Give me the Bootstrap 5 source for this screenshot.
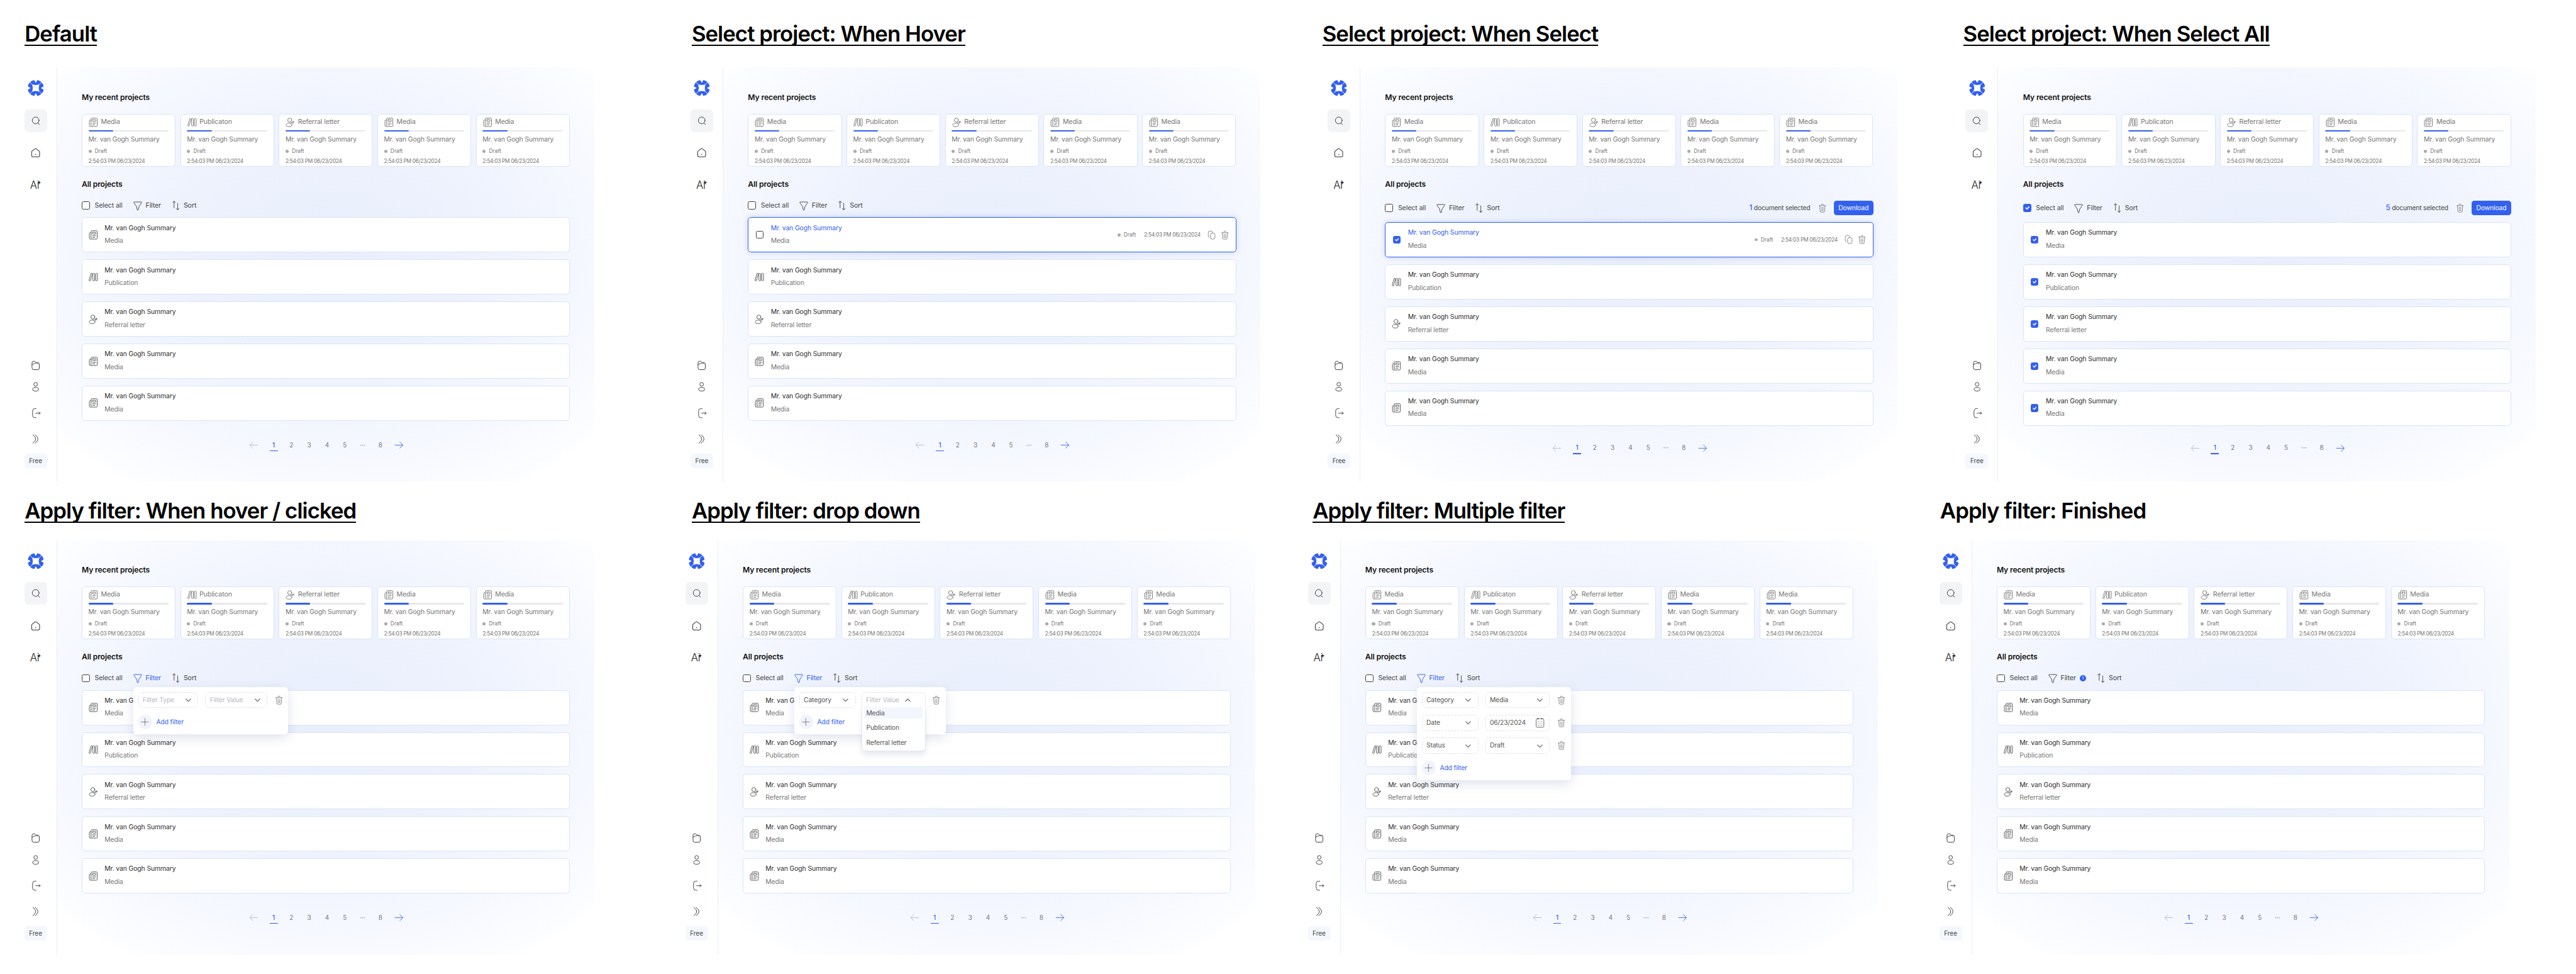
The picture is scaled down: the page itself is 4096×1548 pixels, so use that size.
<!doctype html>
<html lang="en">
<head>
<meta charset="utf-8">
<title>Projects screens</title>
<link href="https://cdn.jsdelivr.net/npm/bootstrap@5.3.0/dist/css/bootstrap.min.css" rel="stylesheet">
<style>
html,body{margin:0;background:#fff;overflow:hidden}
body{font-family:Inter,"Liberation Sans",sans-serif;color:#333}
.stage{zoom:.64322;width:6368px;height:2407px}
.shotrow{height:1168px;padding-left:60px}
.sa{width:1647px}.sb{width:1575px}.sc{width:1577px}.sd{width:1409px}
.se{width:1634px}.sf{width:1539px}.sg{width:1561px}.sh{width:1409px}
.shead{height:167px;padding-top:56px;margin:0;font-size:54px;line-height:54px;font-weight:600;letter-spacing:-.027em;color:#000;white-space:nowrap}
.shotrow.second .shead{padding-top:66px}
.shead span{display:inline-block;border-bottom:4px solid #000;padding-bottom:1px}
.sa .shead{margin-left:1px}.sb .shead{margin-left:3px}.sc .shead{margin-left:-13px}.sd .shead{margin-left:-6px}
.se .shead{margin-left:1px}.sf .shead{margin-left:16px}.sg .shead{margin-left:12px}.sh .shead{margin-left:2px}
.sh .shead span{border-bottom-color:transparent}
.appw{width:1409px;height:1023px}
.rail{width:81px;padding:31px 24px 33px 0;border-right:1px solid #e8edf9;flex:none}
.rico{width:56px;height:40px;flex:none;color:#333}
.rico svg{width:27px;height:27px}
.rsearch{height:56px;background:#f3f4f6;border-radius:10px;margin-top:32px}
.rsearch svg{width:25px;height:25px}
.rhome{height:56px;margin-top:24px}
.rai{height:56px;margin-top:24px;font-size:26px;font-weight:300;color:#222;letter-spacing:-.02em;line-height:1}
.rico.rai svg{width:10px;height:10px;margin:-12px 0 0 -5px;color:#222}
.ruser{margin-top:13px}.rout{margin-top:25px}.rchev{margin-top:24px}
.rico.rout svg{width:30px;height:30px}
.rfree{height:36px;width:56px;background:#f4f7fe;border-radius:8px;margin-top:16px;font-size:15.5px;color:#444;flex:none}
.mainw{width:1328px;padding:61px 60px 0 61px;background:radial-gradient(ellipse 68% 66% at 50% 45%,#e8eefc 0%,#edf2fd 42%,#f6f8ff 74%,#fcfdff 96%,#fff 100%)}
.sect{font-size:19px;line-height:24px;font-weight:600;color:#111;margin:0;letter-spacing:-.012em}
.cardrow{gap:11.6px;margin-top:29px;margin-bottom:31px}
.pcard{width:232px;height:131px;border:1px solid #d8e3fb;border-radius:8px;padding:0 16px 0 15px;flex:none;background:#fff;color:#777}
.chead{height:38px;gap:9px;margin-left:2px;font-size:16.5px;letter-spacing:-.01em}
.chead svg{width:26px;height:26px;margin:0 -3px}
.pcard .progress{height:4px;background:#e8e8eb;border-radius:2px;margin-top:1px}
.pcard .progress-bar{background:#3360ef;border-radius:2px}
.ctitle{font-size:16.2px;line-height:20px;margin-top:10px;letter-spacing:-.012em;white-space:nowrap}
.cdraft{font-size:13px;line-height:16px;margin-top:10px;gap:8px}
.ddot{width:8px;height:8px;border-radius:50%;background:#a9a9ae;flex:none}
.ctime{font-size:13px;line-height:16px;margin-top:8px;letter-spacing:-.035em;white-space:nowrap}
.tools{height:20px;margin-top:31px;margin-bottom:19px;font-size:16.5px;color:#444;letter-spacing:-.01em}
.tools.sel{height:37px;margin-top:28.5px;margin-bottom:16.5px}
.ck.form-check-input{width:20px;height:20px;margin:0;border:1.6px solid #3d3d3d;border-radius:4px;flex:none;background-color:#fff}
.ck.form-check-input:checked{background-color:#3360ef;border-color:#3360ef}
.tck{margin-left:1px}
.tlab{margin-left:12px;width:68px;white-space:nowrap}
.tfil{width:25px;height:25px;margin:0 -3.500px 0 25.500px;flex:none}
.tft{margin-left:11px;width:38px}
.tbad.badge{margin-left:9px;width:16px;height:16px;padding:0;border-radius:50%;background:#3360ef;font-size:10px;font-weight:400;line-height:16px;color:#fff}
.tsort{width:27px;height:27px;margin:0 -5.500px 0 23.500px;flex:none}
.tst{margin-left:11px}
.blue{color:#3360ef}
.selnote{white-space:nowrap;font-size:16px;margin-right:18px;color:#444;letter-spacing:-.02em}
.selnote b{font-weight:500;color:#3360ef;font-size:18px}
.seltrash{width:24px;height:24px;margin-right:16px;color:#777;display:block}
.seltrash svg{width:24px;height:24px;display:block}
.dlbtn.btn{width:98px;height:37px;padding:0;background:#3360ef;border:0;border-radius:7px;font-size:16px;color:#fff;letter-spacing:-.01em}
.rowswrap{gap:17px}
.prow{height:87px;border:1px solid #d8e3fb;border-radius:8px;background:#fff;padding:0 15px 0 17px;flex:none}
.prow .pic{width:20px;height:20px;color:#555;flex:none;display:block}
.pic svg{width:26px;height:26px;margin:-3px;display:block}
.prow .ck{width:19px;height:19px;margin-left:1px}
.ptxt{margin-left:18px;flex:none}
.ptitle{font-size:16.2px;line-height:20px;letter-spacing:-.012em;white-space:nowrap;color:#2d2d2d}
.psub{font-size:16.2px;line-height:20px;color:#777;margin-top:12px;letter-spacing:-.012em}
.prow.on{border:1.6px solid #3360ef;box-shadow:0 0 14px rgba(51,96,239,.22)}
.prow.on .ptitle{color:#3360ef}
.rmeta{gap:8px;font-size:13px;color:#777;margin-right:16px}
.rtime{margin-left:12px;letter-spacing:-.035em;white-space:nowrap}
.rmeta .ddot{width:7px;height:7px}
.racts{gap:8px;color:#777}
.racts svg{width:24px;height:24px}
.pager{margin-left:403px;margin-top:48px;height:24px;font-size:15.5px;color:#777}
.pager.low{margin-top:43px}
.pgi{width:44px;height:24px;flex:none;position:relative}
.pgi svg{width:26px;height:26px}
.pgprev{color:#b5b7bd;margin-right:5.5px}
.pgnext{color:#3360ef;margin-left:2px}
.pgi.act{color:#3360ef;font-weight:500}
.pgi.act::after{content:"";position:absolute;left:12px;right:12px;bottom:-3px;height:2px;background:#3360ef}
.listhold{position:relative}
.fpop{position:absolute;left:127.5px;top:-7px;background:#fff;border-radius:8px;box-shadow:0 8px 26px rgba(60,80,140,.16);padding:12px 11px 12px 12px;z-index:5;font-size:16px;color:#555}
.frow{margin-bottom:17px}
.ffield{height:39.5px;border:1px dashed #dcdfe6;border-radius:10px;background:#fff;padding:0 13px 0 10px;flex:none;position:relative;white-space:nowrap;letter-spacing:-.012em}
.ffield svg{width:20px;height:20px;color:#555}
.ph{color:#b8b9be}
.ftrash{width:24px;height:24px;color:#777;flex:none}
.ftrash svg{width:24px;height:24px}
.e1 .f1{width:148.5px}.e1 .f2{width:154px;margin-left:17.5px}.e1 .ftrash{margin-left:16px}
.f1p .f1{width:140px}.f1p .f2{width:159px;margin-left:14px;justify-content:flex-start!important;border-bottom-left-radius:0;border-bottom-right-radius:0}.f1p .ftrash{margin-left:14px}
.f1p{padding-right:12px}
.g1 .f1{width:140px}.g1 .f2{width:160px;margin-left:17px}.g1 .ftrash{margin-left:17px}
.g1{padding-right:12px}
.f2 .upch{margin-left:11px}
.ffield svg.calic{width:27px;height:27px;margin-right:-3px}
.fmenu.dropdown-menu{position:absolute;display:block;left:-1px;right:-1px;top:100%;min-width:0;border:1px dashed #dcdfe6;border-top:0;border-radius:0 0 10px 10px;margin:0;padding:0 5px 7px;box-shadow:0 8px 14px rgba(60,80,140,.12);font-size:16px;color:#555}
.fmenu .dropdown-item{height:28px;line-height:28px;padding:0 5px;margin-bottom:8px;color:#555;border-radius:4px;letter-spacing:-.012em}
.fmenu .dropdown-item:last-child{margin-bottom:0}
.fmenu .dropdown-item.cur{background:#f3f6fe}
.addf{color:#3360ef;gap:10px;height:36px;letter-spacing:-.012em}
.addc{width:35px;height:36px;border-radius:50%;background:#f1f4fd;color:#666}
.addc svg{width:23px;height:23px}
.logo{width:40px;height:40px;display:block;margin-left:8px}
</style>
</head>
<body>
<svg width="0" height="0" class="position-absolute">
<defs>
<g id="i-doc" fill="none" stroke="currentColor" stroke-width="1.4" stroke-linecap="round" stroke-linejoin="round"><path d="M7 19.500V4.500A2 2 0 0 1 9 2.500h10a2 2 0 0 1 2 2v15a2 2 0 0 1-2 2H5a2 2 0 0 1-2-2V9a2 2 0 0 1 2-2h2"/><rect x="10.500" y="6" width="7" height="4.200" rx=".6"/><path d="M10.500 14h7M10.500 17.500h5"/></g>
<g id="i-book" transform="translate(1.200 1.200) scale(.9)" fill="none" stroke="currentColor" stroke-width="1.500" stroke-linejoin="round"><path d="M7 2.500h1.600a1 1 0 0 1 1 1.300L4.800 20.600a1.200 1.200 0 0 1-1.100.9H2.200a1 1 0 0 1-1-1.300L6 3.400a1 1 0 0 1 1-.9z"/><rect x="11" y="2.500" width="4.600" height="19" rx="1.800"/><rect x="18" y="2.500" width="4.600" height="19" rx="1.800"/></g>
<g id="i-ref" fill="none" stroke="currentColor" stroke-width="1.400" stroke-linecap="round"><circle cx="11" cy="7" r="4.600"/><ellipse cx="9.500" cy="18" rx="6.500" ry="4"/><path d="M13.500 13.500c2.500-.2 4.500-.8 6.500-3.500.8 2-.5 4-3 4.500M20 10.200c-1 .1-2 .2-3 .8"/></g>
<g id="i-search" fill="none" stroke="currentColor" stroke-width="1.400" stroke-linecap="round"><circle cx="11.500" cy="11" r="8"/><path d="M17.500 17.500l3 3.500"/></g>
<g id="i-home" fill="none" stroke="currentColor" stroke-width="1.400" stroke-linejoin="round"><path d="M10.400 3.700a2.600 2.600 0 0 1 3.200 0l6.200 4.900a2.400 2.400 0 0 1 .9 2V18a3 3 0 0 1-3 3H6.300a3 3 0 0 1-3-3v-7.400a2.400 2.400 0 0 1 .9-2z"/><circle cx="12" cy="16" r="1.100" fill="currentColor" stroke="none"/></g>
<g id="i-folder" fill="none" stroke="currentColor" stroke-width="1.300" stroke-linecap="round" stroke-linejoin="round"><path d="M4 10V6.500A3.500 3.500 0 0 1 7.500 3H10l3 3h3.500a3.500 3.500 0 0 1 3.500 3.500V18a3.500 3.500 0 0 1-3.500 3.500H7.500A3.500 3.500 0 0 1 4 18z"/><path d="M4 11c2-2.500 4-3 7-3 1.500-2 4-2 6 .5"/></g>
<g id="i-user" fill="none" stroke="currentColor" stroke-width="1.300"><circle cx="12" cy="6.500" r="4"/><ellipse cx="12" cy="17.500" rx="6.500" ry="4"/></g>
<g id="i-out" fill="none" stroke="currentColor" stroke-width="1.100" stroke-linecap="round" stroke-linejoin="round"><path d="M13 3h-2.500A4.500 4.500 0 0 0 6 7.500v9A4.500 4.500 0 0 0 10.500 21H13"/><path d="M12 12h9M18.500 9.500L21 12l-2.500 2.500"/></g>
<g id="i-chev2" fill="none" stroke="currentColor" stroke-width="1.300" stroke-linecap="round"><path d="M6 3c4 3 6 6 6 9s-2 6-6 9M11 3c4 3 6 6 6 9s-2 6-6 9"/></g>
<g id="i-fun" fill="none" stroke="currentColor" stroke-width="1.400" stroke-linejoin="round"><path d="M3.500 3h17a1 1 0 0 1 .8 1.600L15 13.500 13.300 21.300a1.300 1.300 0 0 1-2.600 0L9 13.500 2.700 4.600A1 1 0 0 1 3.500 3z"/></g>
<g id="i-sort" fill="none" stroke="currentColor" stroke-width="1.300" stroke-linecap="round" stroke-linejoin="round"><path d="M8 17V2.500M5 5.500l3-3 3 3M16 7v14.500M13 18.500l3 3 3-3"/></g>
<g id="i-trash" fill="none" stroke="currentColor" stroke-width="1.300" stroke-linecap="round" stroke-linejoin="round"><path d="M9.500 5V4a2 2 0 0 1 2-2h1a2 2 0 0 1 2 2v1M4 6h16M5.500 6l1 14a2 2 0 0 0 2 2h7a2 2 0 0 0 2-2l1-14M9 11h6M9 14.500h6M9.500 18h5"/></g>
<g id="i-copy" fill="none" stroke="currentColor" stroke-width="1.300" stroke-linecap="round" stroke-linejoin="round"><rect x="9" y="7" width="11" height="15" rx="4.500"/><path d="M6 17a3 3 0 0 1-2.500-3V6A4 4 0 0 1 7.500 2h3a4 4 0 0 1 4 3"/></g>
<g id="i-down" fill="none" stroke="currentColor" stroke-width="2" stroke-linecap="round" stroke-linejoin="round"><path d="M5 9l7 7 7-7"/></g>
<g id="i-up" fill="none" stroke="currentColor" stroke-width="2" stroke-linecap="round" stroke-linejoin="round"><path d="M5 16l7-7 7 7"/></g>
<g id="i-plus" fill="none" stroke="currentColor" stroke-width="1.300" stroke-linecap="round"><path d="M12 3v18M3 12h18"/></g>
<g id="i-cal" fill="none" stroke="currentColor" stroke-width="1.200" stroke-linecap="round"><rect x="3.500" y="3" width="17" height="19" rx="3"/><path d="M8 2v2M16 2v2M8 9.500h.01M12 9.500h.01M16 9.500h.01M8 13.500h.01M12 13.500h.01M16 13.500h.01M8 17.500h.01M12 17.500h.01M16 17.500h.01" stroke-width="1.600"/></g>
<g id="i-left" fill="none" stroke="currentColor" stroke-width="1.300" stroke-linecap="round" stroke-linejoin="round"><path d="M21 12H4M10 5l-7 7 7 7"/></g>
<g id="i-right" fill="none" stroke="currentColor" stroke-width="1.300" stroke-linecap="round" stroke-linejoin="round"><path d="M3 12h17M14 5l7 7-7 7"/></g>
<path id="i-star" fill="currentColor" d="M12 0c1 7 4 10 12 12-8 2-11 5-12 12-1-7-4-10-12-12 8-2 11-5 12-12z"/>
<g id="i-logo"><circle cx="20" cy="20" r="20" fill="#3360ef"/><path d="M12 12Q20 15 28 12 25 20 28 28 20 25 12 28 15 20 12 12z" fill="#fff" stroke="#fff" stroke-width="1.500" stroke-linejoin="round"/><path d="M12 12L3 3M28 12l9-9M28 28l9 9M12 28l-9 9" stroke="#fff" stroke-width="1.300"/><path d="M15.500-1L19 6a1.100 1.100 0 0 0 2 0L24.500-1zM15.500 41L19 34a1.100 1.100 0 0 1 2 0L24.500 41zM-1 15.500L6 19a1.100 1.100 0 0 1 0 2L-1 24.500zM41 15.500L34 19a1.100 1.100 0 0 0 0 2L41 24.500z" fill="#fff"/></g>
</defs>
</svg>
<div class="stage" id="stage"></div>
<script>
const ic=(n,c='')=>`<svg viewBox="0 0 24 24" class="${c}" aria-hidden="true"><use href="#i-${n}"/></svg>`;
const kinds=[['doc','Media','Media'],['book','Publicaton','Publication'],['ref','Referral letter','Referral letter'],['doc','Media','Media'],['doc','Media','Media']];
const cards=kinds.map(k=>`<div class="card pcard"><div class="chead d-flex align-items-center">${ic(k[0])}<span>${k[1]}</span></div><div class="progress"><div class="progress-bar" style="width:31%"></div></div><div class="ctitle">Mr. van Gogh Summary</div><div class="cdraft d-flex align-items-center"><i class="ddot"></i><span>Draft</span></div><div class="ctime">2:54:03 PM 06/23/2024</div></div>`).join('');
const rail=`<aside class="rail d-flex flex-column">
<div class="rlogo"><svg class="logo" viewBox="0 0 40 40" aria-hidden="true"><use href="#i-logo"/></svg></div>
<div class="rico rsearch d-flex align-items-center justify-content-center">${ic('search')}</div>
<div class="rico rhome d-flex align-items-center justify-content-center">${ic('home')}</div>
<div class="rico rai d-flex align-items-center justify-content-center"><span>Ai</span>${ic('star')}</div>
<div class="rico mt-auto d-flex align-items-center justify-content-center">${ic('folder')}</div>
<div class="rico ruser d-flex align-items-center justify-content-center">${ic('user')}</div>
<div class="rico rout d-flex align-items-center justify-content-center">${ic('out')}</div>
<div class="rico rchev d-flex align-items-center justify-content-center">${ic('chev2')}</div>
<div class="rfree d-flex align-items-center justify-content-center">Free</div>
</aside>`;
function field(cls,txt,opt={}){const t=opt.ph?`<span class="ph">${txt}</span>`:`<span>${txt}</span>`;const tail=opt.tail||ic(opt.up?'up':'down',opt.up?'upch':'');return `<div class="ffield ${cls} d-flex align-items-center justify-content-between">${t}${tail}${opt.menu||''}</div>`}
const ftr=`<div class="ftrash d-flex justify-content-center">${ic('trash')}</div>`;
const add=`<div class="addf d-flex align-items-center"><span class="addc d-flex align-items-center justify-content-center">${ic('plus')}</span><span>Add filter</span></div>`;
const menu=`<div class="dropdown-menu fmenu"><div class="dropdown-item cur">Media</div><div class="dropdown-item">Publication</div><div class="dropdown-item">Referral letter</div></div>`;
const pops={
 e:`<div class="fpop e1"><div class="frow d-flex align-items-center">${field('f1','Filter Type',{ph:1})}${field('f2','Filter Value',{ph:1})}${ftr}</div>${add}</div>`,
 f:`<div class="fpop f1p"><div class="frow d-flex align-items-center">${field('f1','Category')}${field('f2','Filter Value',{ph:1,up:1,menu})}${ftr}</div>${add}</div>`,
 g:`<div class="fpop g1"><div class="frow d-flex align-items-center">${field('f1','Category')}${field('f2','Media')}${ftr}</div><div class="frow d-flex align-items-center">${field('f1','Date')}${field('f2','06/23/2024',{tail:ic('cal','calic')})}${ftr}</div><div class="frow d-flex align-items-center">${field('f1','Status')}${field('f2','Draft')}${ftr}</div>${add}</div>`
};
const meta=`<div class="rmeta d-flex align-items-center ms-auto"><i class="ddot"></i><span>Draft</span><span class="rtime">2:54:03 PM 06/23/2024</span></div><div class="racts d-flex align-items-center">${ic('copy')}${ic('trash')}</div>`;
function row(i,p){const k=kinds[i];const sub=k[2];let left=`<span class="pic">${ic(k[0])}</span>`,cl='',rt='';
 if(p.hover&&i==0){left=`<input class="form-check-input ck" type="checkbox" aria-label="select">`;cl='on';rt=meta}
 if(p.sel1&&i==0){left=`<input class="form-check-input ck" type="checkbox" checked aria-label="select">`;cl='on';rt=meta}
 if(p.all){left=`<input class="form-check-input ck" type="checkbox" checked aria-label="select">`}
 return `<div class="card flex-row prow align-items-center ${cl}">${left}<div class="ptxt"><div class="ptitle">Mr. van Gogh Summary</div><div class="psub">${sub}</div></div>${rt}</div>`}
function panel(p){
 const sel=p.sel1||p.all;
 const right=sel?`<div class="ms-auto d-flex align-items-center"><span class="selnote"><b>${p.all?5:1}</b> document selected</span><span class="seltrash">${ic('trash')}</span><button class="btn dlbtn" type="button">Download</button></div>`:'';
 const rows=[0,1,2,3,4].map(i=>row(i,p)).join('');
 const pages=['1','2','3','4','5','···','8'].map((n,i)=>`<div class="pgi d-flex align-items-center justify-content-center ${i==0?'act':''}">${n}</div>`).join('');
 return `<section class="${p.w}"><h2 class="shead"><span>${p.t}</span></h2><div class="appw d-flex">${rail}<main class="mainw">
<h3 class="sect">My recent projects</h3><div class="cardrow d-flex">${cards}</div>
<h3 class="sect">All projects</h3>
<div class="tools d-flex align-items-center ${sel?'sel':''}"><input class="form-check-input ck tck" type="checkbox" ${p.all?'checked':''} aria-label="select all"><span class="tlab">Select all</span><svg viewBox="0 0 24 24" class="tfil ${p.fil?'blue':''}" aria-hidden="true"><use href="#i-fun"/></svg><span class="tft ${p.fil?'blue':''}">Filter</span>${p.badge?'<span class="badge tbad">1</span>':''}<svg viewBox="0 0 24 24" class="tsort" aria-hidden="true"><use href="#i-sort"/></svg><span class="tst">Sort</span>${right}</div>
<div class="listhold"><div class="rowswrap d-flex flex-column">${rows}</div>${p.pop?pops[p.pop]:''}</div>
<nav class="pager d-flex align-items-center ${sel?'low':''}"><div class="pgi pgprev d-flex align-items-center justify-content-center">${ic('left')}</div>${pages}<div class="pgi pgnext d-flex align-items-center justify-content-center">${ic('right')}</div></nav>
</main></div></section>`}
const firstRow=[{w:'sa',t:'Default'},{w:'sb',t:'Select project: When Hover',hover:1},{w:'sc',t:'Select project: When Select',sel1:1},{w:'sd',t:'Select project: When Select All',all:1}];
const secondRow=[{w:'se',t:'Apply filter: When hover / clicked',fil:1,pop:'e'},{w:'sf',t:'Apply filter: drop down',fil:1,pop:'f'},{w:'sg',t:'Apply filter: Multiple filter',fil:1,pop:'g'},{w:'sh',t:'Apply filter: Finished',badge:1}];
document.getElementById('stage').innerHTML=`<div class="shotrow d-flex">${firstRow.map(panel).join('')}</div><div class="shotrow second d-flex">${secondRow.map(panel).join('')}</div>`;
</script>
<script src="https://cdn.jsdelivr.net/npm/bootstrap@5.3.0/dist/js/bootstrap.bundle.min.js"></script>
</body>
</html>
